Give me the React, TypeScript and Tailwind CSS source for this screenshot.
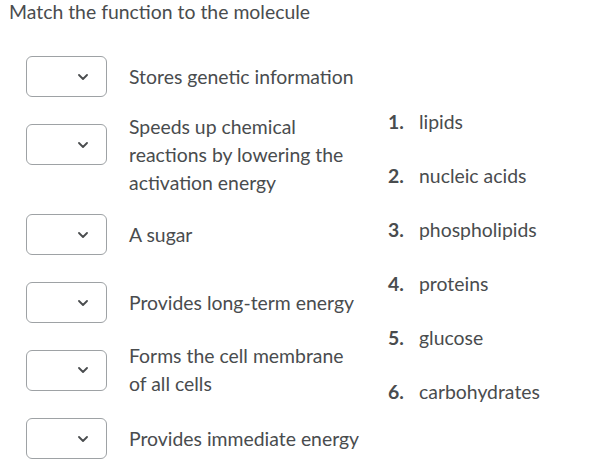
const rows = [
  { text: ["Stores genetic information"], wrap: "mt-[56px] items-center", sel: "" },
  { text: ["Speeds up chemical", "reactions by lowering the", "activation energy"], wrap: "mt-[16px] items-start", sel: "mt-[11px]" },
  { text: ["A sugar"], wrap: "mt-[17px] items-center", sel: "" },
  { text: ["Provides long-term energy"], wrap: "mt-[27px] items-center", sel: "" },
  { text: ["Forms the cell membrane", "of all cells"], wrap: "mt-[19px] items-center", sel: "" },
  { text: ["Provides immediate energy"], wrap: "mt-[20px] items-center", sel: "" },
];

const answers = ["lipids", "nucleic acids", "phospholipids", "proteins", "glucose", "carbohydrates"];

function Dropdown({ className }: { className: string }) {
  return (
    <div className={`flex h-[41px] w-[81px] shrink-0 items-center justify-end rounded-[6px] border border-[#9ea2a5] bg-white pr-[18px] ${className}`}>
      <svg width="10" height="6" viewBox="0 0 10 6" fill="none">
        <path d="M1 1l4 4 4-4" stroke="#494c4e" strokeWidth="1.8" strokeLinecap="round" strokeLinejoin="round" />
      </svg>
    </div>
  );
}

export default function App() {
  return (
    <div className="h-[476px] w-[593px] overflow-hidden bg-white text-[19.4px] text-[#494c4e]" style={{ fontFamily: "Lato, 'Open Sans', sans-serif" }}>
      <h1 className="pl-[9px] text-[19.4px] leading-[23px]">Match the function to the molecule</h1>
      <div className="flex">
        <div className="flex w-[362px] flex-col pl-[26px] -mt-[23px]">
          {rows.map((r, i) => (
            <div key={i} className={`flex gap-[22px] ${r.wrap}`}>
              <Dropdown className={r.sel} />
              <div className="leading-[28px]">
                {r.text.map((t) => (
                  <div key={t}>{t}</div>
                ))}
              </div>
            </div>
          ))}
        </div>
        <ol className="mt-[85px] flex flex-col gap-[26px] pl-[26px]">
          {answers.map((a, i) => (
            <li key={a} className="flex leading-[28px]">
              <span className="w-[31px] font-bold">{i + 1}.</span>
              <span>{a}</span>
            </li>
          ))}
        </ol>
      </div>
    </div>
  );
}
